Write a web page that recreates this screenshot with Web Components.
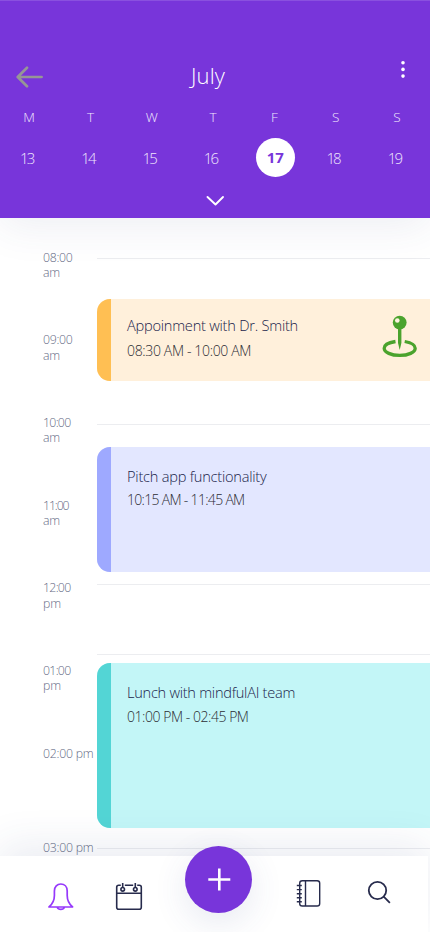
<!DOCTYPE html>
<html lang="en">
<head>
<meta charset="utf-8">
<title>July</title>
<style>
html,body{margin:0;height:100%;background:#fff}
body{font-family:"Open Sans","Noto Sans",sans-serif;font-weight:300;width:430px;height:932px;overflow:hidden}
</style>
</head>
<body>
<calendar-app></calendar-app>
<script>
const define=(name,html,setup)=>customElements.define(name,class extends HTMLElement{
  connectedCallback(){
    if(this.shadowRoot)return;
    const root=this.attachShadow({mode:'open'});
    const t=document.createElement('template');
    t.innerHTML=typeof html==='function'?html(this):html;
    root.append(t.content.cloneNode(true));
    if(setup)setup(this,root);
  }
});

// Text set to a given measure by adjusting its tracking.
define('fit-text',`<style>:host{display:inline-block;white-space:nowrap}span{display:inline-block}</style><span><slot></slot></span>`,(el,root)=>{
  const w=parseFloat(el.getAttribute('w'));
  if(!w)return;
  const s=root.querySelector('span');
  const n=el.textContent.length;
  const d=(w-s.getBoundingClientRect().width)/n;
  s.style.letterSpacing=d.toFixed(3)+'px';
});

define('week-day',el=>`<style>
:host{display:grid;grid-template-rows:18px 39px;row-gap:11.5px;justify-items:center;color:#efe5fc}
.l{font-size:13.5px;line-height:18px}
.n{font-size:15px;line-height:39px;width:39px;height:39px;text-align:center;margin-left:-5px;padding-top:1px;box-sizing:border-box}
:host([active]) .n{background:#fff;color:#7835da;border-radius:50%;font-weight:700;margin-left:2px;padding:0}
</style><div class="l"><slot></slot></div><div class="n"><fit-text w="${el.hasAttribute('active')?17:13.5}">${el.getAttribute('date')}</fit-text></div>`);

define('month-header',`<style>
:host{display:block;height:218px;background:#7835da;box-sizing:border-box;padding-top:57px;color:#fff;position:relative;z-index:2;box-shadow:0 8px 40px rgba(50,65,125,.09);border-top:1px solid #8a50df}
.bar{display:grid;grid-template-columns:60px 1fr 60px;height:36px}
.bar svg{display:block}
.back{margin:8px 0 0 15px}.more{margin:2px 0 0 28px}
h1{margin:0;font-size:22px;line-height:34px;font-weight:300;text-align:center;padding-right:14px}
.week{display:grid;grid-template-columns:repeat(7,61.3px);margin:14px 0 0 -1.5px}
.down{display:block;margin:18px auto 0}
</style>
<div class="bar"><svg class="back" width="30" height="24" fill="none" stroke="#969696" stroke-width="2.7" stroke-linecap="round" stroke-linejoin="round"><path d="M26.600 11H3M12 1.8 2.7 11l9.3 9.2"/></svg>
<h1><fit-text w="34">July</fit-text></h1>
<svg class="more" width="10" height="20" fill="#fff"><circle cx="5" cy="2.7" r="1.8"/><circle cx="5" cy="9.4" r="1.8"/><circle cx="5" cy="16.1" r="1.8"/></svg></div>
<div class="week"><week-day date="13">M</week-day><week-day date="14">T</week-day><week-day date="15">W</week-day><week-day date="16">T</week-day><week-day date="17" active>F</week-day><week-day date="18">S</week-day><week-day date="19">S</week-day></div>
<svg class="down" width="20" height="12" fill="none" stroke="#fff" stroke-width="1.9" stroke-linecap="round" stroke-linejoin="round"><path d="M2.5 2 10.500 9.500 18 2"/></svg>`);

define('hour-label',el=>`<style>:host{display:block;height:82.700px;font-size:12.3px;line-height:15.5px;color:#656b85;box-sizing:border-box;white-space:nowrap}:host([tall]){height:94px}</style>
${el.getAttribute('t').split('|').map(p=>{const[t,w]=p.split('/');return `<div><fit-text w="${w}">${t}</fit-text></div>`}).join('')}`);

define('hour-line',`<style>:host{display:block;height:1px;background:#ecedf0}</style>`);

define('event-card',`<style>
:host{display:flex;box-sizing:border-box;border-radius:13px 0 0 13px;overflow:hidden;background:var(--fill);color:#20234a}
.edge{width:14px;background:var(--edge);flex:none}
.body{padding:var(--top,16px) 0 0 16px;flex:1}
.t{font-size:14.6px;line-height:20px}.s{font-size:14px;line-height:20px;color:#2c2c33;margin-top:var(--gap,6px)}
</style><div class="edge"></div><div class="body"><div class="t"><slot name="title"></slot></div><div class="s"><slot name="time"></slot></div></div><slot></slot>`);

define('map-pin',`<style>:host{display:block;margin:16.500px 12.500px 0 0}svg{display:block}</style>
<svg width="36" height="44"><path d="M13.500 26.500C6.500 27.600 2.200 30.100 2.200 33.200c0 4.200 7 7.200 15.500 7.200s15.500-3 15.500-7.200c0-3.100-4.300-5.600-10.500-6.700" fill="none" stroke="#4ba32d" stroke-width="3.300"/><circle cx="17.700" cy="7.600" r="6.900" fill="#4ba32d"/><path d="M16 13h3.400v15l-1.700 7-1.700-7z" fill="#4ba32d"/><circle cx="15.300" cy="5.500" r="2.300" fill="#fff4e2"/></svg>`);

define('day-timeline',`<style>
:host{display:grid;grid-template-columns:54px 1fr;height:638px;padding-left:43px;box-sizing:border-box;overflow:hidden}
.hours{padding-top:31.500px}
.slots{display:flow-root}
</style>
<div class="hours">
<hour-label t="08:00/29.5|am/17"></hour-label><hour-label t="09:00/29.5|am/17"></hour-label><hour-label t="10:00/27.5|am/17"></hour-label><hour-label t="11:00/25.5|am/17"></hour-label><hour-label t="12:00/27.5|pm/18"></hour-label><hour-label t="01:00/27.5|pm/18"></hour-label><hour-label tall t="02:00 pm/50.5"></hour-label><hour-label t="03:00 pm/50.5"></hour-label></div>
<div class="slots">
<hour-line style="margin-top:40px"></hour-line>
<event-card style="margin-top:39.5px;height:82.5px;--fill:#fff0db;--edge:#ffbf53"><fit-text slot="title" w="171">Appoinment with Dr. Smith</fit-text><fit-text slot="time" w="124">08:30 AM - 10:00 AM</fit-text><map-pin></map-pin></event-card>
<hour-line style="margin-top:43px"></hour-line>
<event-card style="margin-top:22px;height:124.5px;--fill:#e3e7ff;--edge:#9ea9ff;--top:19px;--gap:4px"><fit-text slot="title" w="139.5">Pitch app functionality</fit-text><fit-text slot="time" w="117.5">10:15 AM - 11:45 AM</fit-text></event-card>
<hour-line style="margin-top:12.5px"></hour-line>
<hour-line style="margin-top:69px"></hour-line>
<event-card style="margin-top:8.4px;height:165px;--fill:#c3f6f7;--edge:#53d5d5;--top:19px;--gap:4.500px"><fit-text slot="title" w="168">Lunch with mindfulAI team</fit-text><fit-text slot="time" w="121.5">01:00 PM - 02:45 PM</fit-text></event-card>
<hour-line style="margin-top:19.600px"></hour-line>
</div>`);

define('bottom-nav',`<style>
:host{display:grid;grid-template-columns:46px 54px 85px 67px 112px 1fr;height:76px;background:#fff;position:relative;z-index:3;box-shadow:0 -10px 42px rgba(50,65,125,.1);width:428px}
svg{display:block;fill:none;stroke:#272b4c;stroke-width:1.6;stroke-linejoin:round}
.a{margin:25px 0 0 1px;stroke:#9639fb;stroke-width:1.700}.b{margin:26px 0 0 15px}
.add{width:67px;height:67px;border-radius:50%;background:#7835da;margin-top:-10px;box-shadow:0 10px 34px rgba(60,70,140,.12);display:grid;place-items:center}
.add svg{stroke:#fff;stroke-width:2.600}
.c{margin:23px 0 0 43.500px}.d{margin:23px 0 0 3px}
</style><span></span>
<svg class="a" width="28" height="30"><path d="M2 26C5.500 23 7.400 19.700 7.400 14.500V10c0-4.300 2.800-7 6.400-7s6.400 2.700 6.400 7v4.500c0 5.200 1.900 8.500 5.400 11.500zM10.200 26.200c.6 1.500 1.900 2.100 3.600 2.100s3-.6 3.600-2.100"/></svg>
<svg class="b" width="30" height="30"><path d="M5.800 3.300H3.700q-2 0-2 2v19.900q0 2 2 2h20.600q2 0 2-2V5.300q0-2-2-2h-2.100M9.800 3.300h8.400M1.700 11.200h24.600M7.700 1v4.400M20.300 1v4.400"/><circle cx="7.700" cy="7.300" r="1.800"/><circle cx="20.300" cy="7.300" r="1.800"/></svg>
<div class="add"><svg width="26" height="26"><path d="M13 2v22M2 13h22" transform="translate(.3 -.5)"/></svg></div>
<svg class="c" width="28" height="30" style="stroke-width:1.400"><rect x="3.700" y="1.700" width="20" height="25.300" rx="2.600"/><path d="M9.500 1.700V27M.8 6.500h5M.8 10.600h5M.8 14.700h5M.8 18.800h5M.8 22.700h5"/></svg>
<svg class="d" width="28" height="28" style="stroke-width:1.800"><circle cx="10.500" cy="11.500" r="8.700"/><path d="m16.700 17.700 6.200 6.100"/></svg>`);

define('calendar-app',`<style>:host{display:flex;flex-direction:column;width:430px;height:932px;background:#fff;overflow:hidden}</style>
<month-header></month-header><day-timeline></day-timeline><bottom-nav></bottom-nav>`);
</script>
</body>
</html>
